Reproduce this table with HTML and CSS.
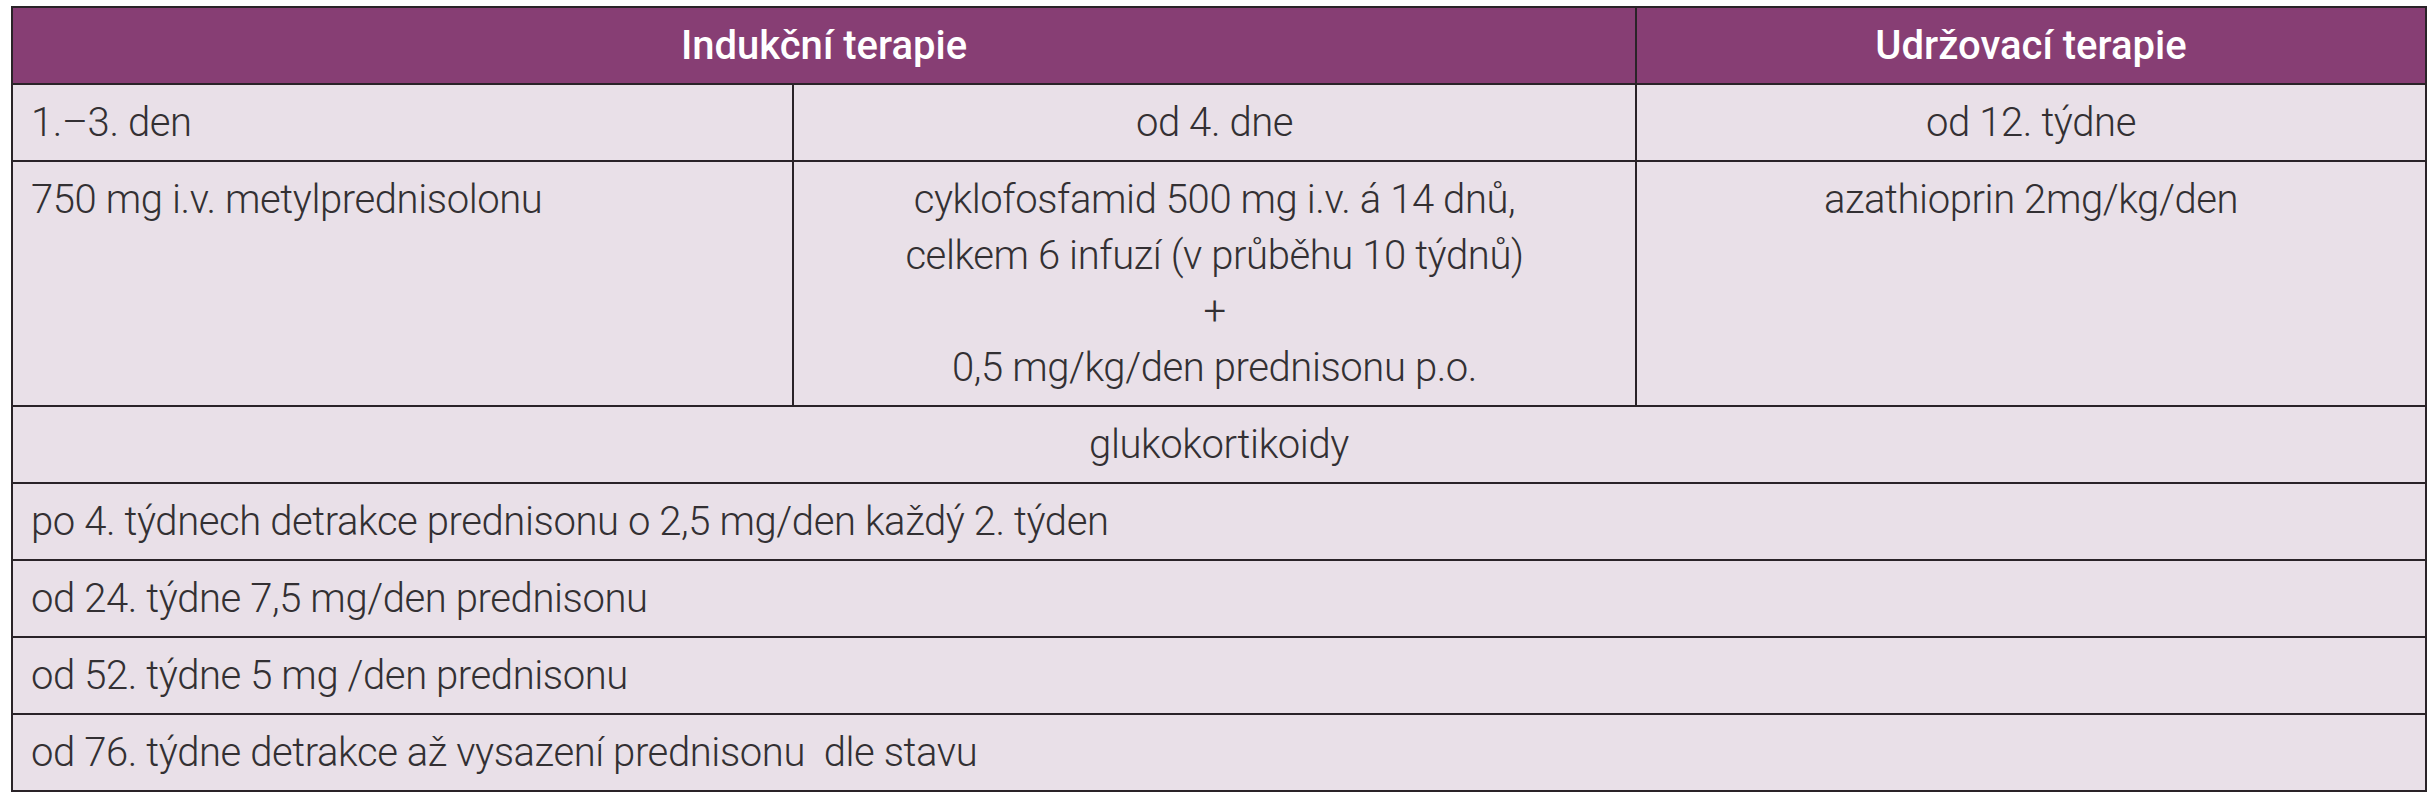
FILE: index.html
```html
<!DOCTYPE html>
<html lang="cs">
<head>
<meta charset="utf-8">
<title>Terapie</title>
<link rel="stylesheet" href="styles.css">
</head>
<body>
<table class="therapy">
  <colgroup>
    <col class="c1">
    <col class="c2">
    <col class="c3">
  </colgroup>
  <thead>
    <tr>
      <th colspan="2">Indukční terapie</th>
      <th>Udržovací terapie</th>
    </tr>
  </thead>
  <tbody>
    <tr>
      <td class="left">1.–3. den</td>
      <td>od 4. dne</td>
      <td>od 12. týdne</td>
    </tr>
    <tr class="tall">
      <td class="left">750 mg i.v. metylprednisolonu</td>
      <td>cyklofosfamid 500 mg i.v. á 14 dnů,<br>celkem 6 infuzí (v průběhu 10 týdnů)<br>+<br>0,5 mg/kg/den prednisonu p.o.</td>
      <td>azathioprin 2mg/kg/den</td>
    </tr>
    <tr>
      <td colspan="3">glukokortikoidy</td>
    </tr>
    <tr>
      <td colspan="3" class="left">po 4. týdnech detrakce prednisonu o 2,5 mg/den každý 2. týden</td>
    </tr>
    <tr>
      <td colspan="3" class="left">od 24. týdne 7,5 mg/den prednisonu</td>
    </tr>
    <tr>
      <td colspan="3" class="left">od 52. týdne 5 mg /den prednisonu</td>
    </tr>
    <tr>
      <td colspan="3" class="left">od 76. týdne detrakce až vysazení prednisonu&nbsp; dle stavu</td>
    </tr>
  </tbody>
</table>
</body>
</html>
```

FILE: styles.css
```css
html, body {
  margin: 0;
  padding: 0;
  background: #ffffff;
}

body {
  padding: 6px 0 0 11px;
  font-family: Roboto, "Liberation Sans", sans-serif;
}

.therapy {
  border-collapse: collapse;
  table-layout: fixed;
  width: 2414px;
  background: #e9e0e8;
  color: #333033;
}

.therapy .c1 { width: 781px; }
.therapy .c2 { width: 843px; }
.therapy .c3 { width: 790px; }

.therapy th,
.therapy td {
  border: 2px solid #2a2328;
  padding: 10px 18px 9px;
  font-size: 40px;
  line-height: 56px;
  text-align: center;
  vertical-align: top;
}

.therapy td {
  font-weight: 300;
  letter-spacing: -0.4px;
}

.therapy th {
  background: #873e74;
  color: #ffffff;
  font-weight: 500;
  letter-spacing: 0;
  vertical-align: middle;
}

.therapy td.left {
  text-align: left;
}
```
